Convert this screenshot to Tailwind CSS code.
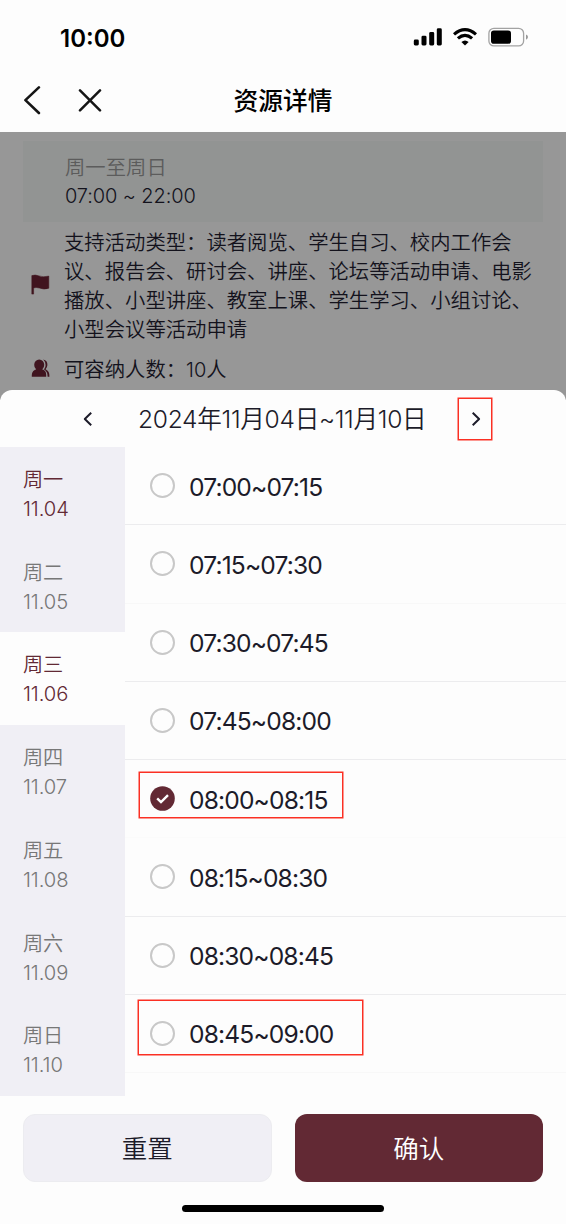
<!DOCTYPE html>
<html lang="zh-CN">
<head>
<meta charset="utf-8">
<meta name="viewport" content="width=device-width">
<title>资源详情</title>
<script src="https://cdn.jsdelivr.net/npm/@tailwindcss/browser@4"></script>
</head>
<body class="bg-[#fdfdfd]">
<div class="w-[566px] h-[1224px] overflow-hidden flex flex-col bg-[#fdfdfd] text-[#1c1b29] font-['Inter','Noto_Sans_CJK_SC',sans-serif]">

  <!-- Status bar -->
  <div class="h-[74px] shrink-0 flex items-center justify-between pl-[60px] pr-[38px] text-black">
    <span class="text-[24px] leading-[30px] font-semibold pt-[3px]">10:00</span>
    <div class="flex items-center gap-[11px]">
      <svg width="29" height="18" viewBox="0 0 29 18"><rect x="0.8" y="11.5" width="5" height="6" rx="1.4"/><rect x="8.5" y="7.7" width="5" height="9.8" rx="1.4"/><rect x="16.2" y="4" width="5" height="13.5" rx="1.4"/><rect x="23.8" y="0.3" width="5" height="17.2" rx="1.4"/></svg>
      <svg width="24" height="18" viewBox="0 0 24 18"><g fill="none" stroke="#000" stroke-width="3.2"><path d="M1 6.4Q12-3 23 6.4"/><path d="M4.9 10.4Q12 4.3 19.1 10.4"/></g><path d="M8.4 13.9Q12 10.9 15.6 13.9L12 17.6Z"/></svg>
      <svg width="40" height="20" viewBox="0 0 40 20"><rect x="0.9" y="1.3" width="34.7" height="17.6" rx="5" fill="none" stroke="#a3a3a3" stroke-width="1.3"/><rect x="3" y="3.5" width="20" height="13.2" rx="2.8"/><path d="M38 7.5q2 .8 2 2.6t-2 2.6z" fill="#999"/></svg>
    </div>
  </div>

  <!-- Navigation bar -->
  <div class="h-[58px] shrink-0 grid grid-cols-[1fr_auto_1fr] items-center text-black">
    <div class="flex items-center pl-[23px] gap-[37px] pb-[5px]">
      <svg width="18" height="29" viewBox="0 0 18 29" fill="none" stroke="#151515" stroke-width="2.6" stroke-linecap="round" stroke-linejoin="round"><path d="M15.9 1.4L2.4 14.1L15.9 27"/></svg>
      <svg width="24" height="24" viewBox="0 0 24 24" fill="none" stroke="#151515" stroke-width="2.5" stroke-linecap="round"><path d="M2 1.4L22 21.4M22 1.4L2 21.4"/></svg>
    </div>
    <h1 class="text-[24.7px] leading-[32px] font-medium pb-[4px]">资源详情</h1>
    <div></div>
  </div>

  <!-- Dimmed page content -->
  <div class="h-[268px] shrink-0 bg-[#979797] px-[23px] pt-[9px] text-[20.35px] leading-[29px] font-[350] text-[#13121c] -mb-[10px]">
    <div class="h-[81px] bg-[#929493] pl-[42px] pt-[12px]">
      <div class="text-[#5c5c5c]">周一至周日</div>
      <div class="text-[20px] tracking-[-0.1px]">07:00 ~ 22:00</div>
    </div>
    <div class="mt-[6px] pl-[7px] flex items-center gap-[14px]">
      <svg class="shrink-0" width="20" height="24" viewBox="0 0 20 24" fill="#40141f"><path d="M1.8 1.6Q5 .3 9 1.9T18.8 2.1V14.2Q14 16 9.5 14.1Q6 13 3.6 13.9V20.1H1.8Z" stroke="#40141f" stroke-width=".5"/></svg>
      <p class="whitespace-nowrap">支持活动类型：读者阅览、学生自习、校内工作会<br>议、报告会、研讨会、讲座、论坛等活动申请、电影<br>播放、小型讲座、教室上课、学生学习、小组讨论、<br>小型会议等活动申请</p>
    </div>
    <div class="mt-[11px] pl-[7px] flex items-center gap-[14px]">
      <svg class="shrink-0" width="20" height="24" viewBox="0 0 20 24" fill="#40141f"><path d="M1.8 18.7C1.7 14.5 2.8 12.2 6.2 11.4A5.4 5.4 0 0 1 4.2 6.8A5 5.2 0 0 1 14.2 6.8A5.4 5.4 0 0 1 12.2 11.4C15.8 12.2 16.4 14.5 16.2 18.7Z"/><path d="M13.2 1.6Q17.6 2.6 17.4 7Q17.3 9.6 15.6 11.2Q19.8 13 19.4 18.7H17.6Q17.9 13.6 14 11.4Q15.7 9.5 15.6 7Q15.6 3.8 13.2 1.6Z"/></svg>
      <p>可容纳人数：<span class="text-[20px]">10</span>人</p>
    </div>
  </div>

  <!-- Time picker sheet -->
  <div class="flex-1 min-h-0 flex flex-col bg-[#fdfdfd] rounded-t-[12px] relative">
    <div class="h-[57px] shrink-0 flex items-center pl-[80px]">
      <svg width="16" height="18" viewBox="0 0 16 18" fill="none" stroke="#1c1b29" stroke-width="2" stroke-linejoin="round"><path d="M11.2 2.8L4.8 9L11.2 15.2"/></svg>
      <span class="ml-[42px] w-[290px] pt-px text-[24.6px] leading-[34px] tracking-[-0.3px] font-[350] whitespace-nowrap">2024年11月04日~11月10日</span>
      <div class="ml-[30px] w-[34px] h-[42px] border border-[#fb3024] shadow-[0_0_0_0.5px_#fb3024] flex items-center justify-center">
        <svg width="16" height="18" viewBox="0 0 16 18" fill="none" stroke="#1c1b29" stroke-width="2" stroke-linejoin="round"><path d="M5.7 2.8L12.1 9L5.7 15.2"/></svg>
      </div>
    </div>

    <div class="h-[649px] shrink-0 flex">
      <div class="w-[125px] grid grid-rows-7 bg-[#f0eff5] text-[20.2px] leading-[29px] font-[350] tracking-[-0.1px] text-[#777]">
        <div class="pl-[23px] pt-[18px] text-[#622934]">周一<br>11.04</div>
        <div class="pl-[23px] pt-[18px]">周二<br>11.05</div>
        <div class="pl-[23px] pt-[18px] text-[#622934] bg-[#fdfdfd]">周三<br>11.06</div>
        <div class="pl-[23px] pt-[18px]">周四<br>11.07</div>
        <div class="pl-[23px] pt-[18px]">周五<br>11.08</div>
        <div class="pl-[23px] pt-[18px]">周六<br>11.09</div>
        <div class="pl-[23px] pt-[18px]">周日<br>11.10</div>
      </div>
      <div class="flex-1 text-[24.6px] leading-[32px] tracking-[-0.85px]">
        <div class="h-[78.25px] border-b border-[#ececee] flex items-center pl-[25px] gap-[14px]"><i class="size-[25px] rounded-full border-[2.5px] border-[#c8c8c8]"></i><span class="pt-[2px]">07:00~07:15</span></div>
        <div class="h-[78.25px] border-b border-[#f8f8f8] flex items-center pl-[25px] gap-[14px]"><i class="size-[25px] rounded-full border-[2.5px] border-[#c8c8c8]"></i><span class="pt-[2px]">07:15~07:30</span></div>
        <div class="h-[78.25px] border-b border-[#ececee] flex items-center pl-[25px] gap-[14px]"><i class="size-[25px] rounded-full border-[2.5px] border-[#c8c8c8]"></i><span class="pt-[2px]">07:30~07:45</span></div>
        <div class="h-[78.25px] border-b border-[#ececee] flex items-center pl-[25px] gap-[14px]"><i class="size-[25px] rounded-full border-[2.5px] border-[#c8c8c8]"></i><span class="pt-[2px]">07:45~08:00</span></div>
        <div class="h-[78.25px] border-b border-[#fbfbfb] flex items-center pl-[25px] gap-[14px] relative">
          <svg width="25" height="25" viewBox="0 0 25 25"><circle cx="12.5" cy="12.5" r="12.3" fill="#622934"/><path d="M7.2 12.3L11 16L18 9.2" fill="none" stroke="#fff" stroke-width="2.4"/></svg>
          <span class="pt-[2px]">08:00~08:15</span>
          <div class="absolute left-[14px] top-[12px] w-[204px] h-[46px] border border-[#fb3024] shadow-[0_0_0_0.5px_#fb3024]"></div>
        </div>
        <div class="h-[78.25px] border-b border-[#ececee] flex items-center pl-[25px] gap-[14px]"><i class="size-[25px] rounded-full border-[2.5px] border-[#c8c8c8]"></i><span class="pt-[2px]">08:15~08:30</span></div>
        <div class="h-[78.25px] border-b border-[#ececee] flex items-center pl-[25px] gap-[14px]"><i class="size-[25px] rounded-full border-[2.5px] border-[#c8c8c8]"></i><span class="pt-[2px]">08:30~08:45</span></div>
        <div class="h-[78.25px] border-b border-[#f8f8f8] flex items-center pl-[25px] gap-[14px] relative">
          <i class="size-[25px] rounded-full border-[2.5px] border-[#c8c8c8]"></i><span class="pt-[2px]">08:45~09:00</span>
          <div class="absolute left-[13px] top-[5px] w-[225px] h-[55px] border border-[#fb3024] shadow-[0_0_0_0.5px_#fb3024]"></div>
        </div>
      </div>
    </div>

    <div class="mt-[18px] h-[68px] shrink-0 px-[23px] grid grid-cols-2 gap-[23px] text-[25.5px] font-[350]">
      <button class="rounded-[12px] bg-[#f0eff5] border border-[#ececf0] pt-[2px]">重置</button>
      <button class="rounded-[12px] bg-[#622934] text-white pt-[2px]">确认</button>
    </div>
    <div class="mt-[23px] h-[7px] w-[202px] mx-auto shrink-0 rounded-full bg-black"></div>
  </div>
</div>
</body>
</html>
